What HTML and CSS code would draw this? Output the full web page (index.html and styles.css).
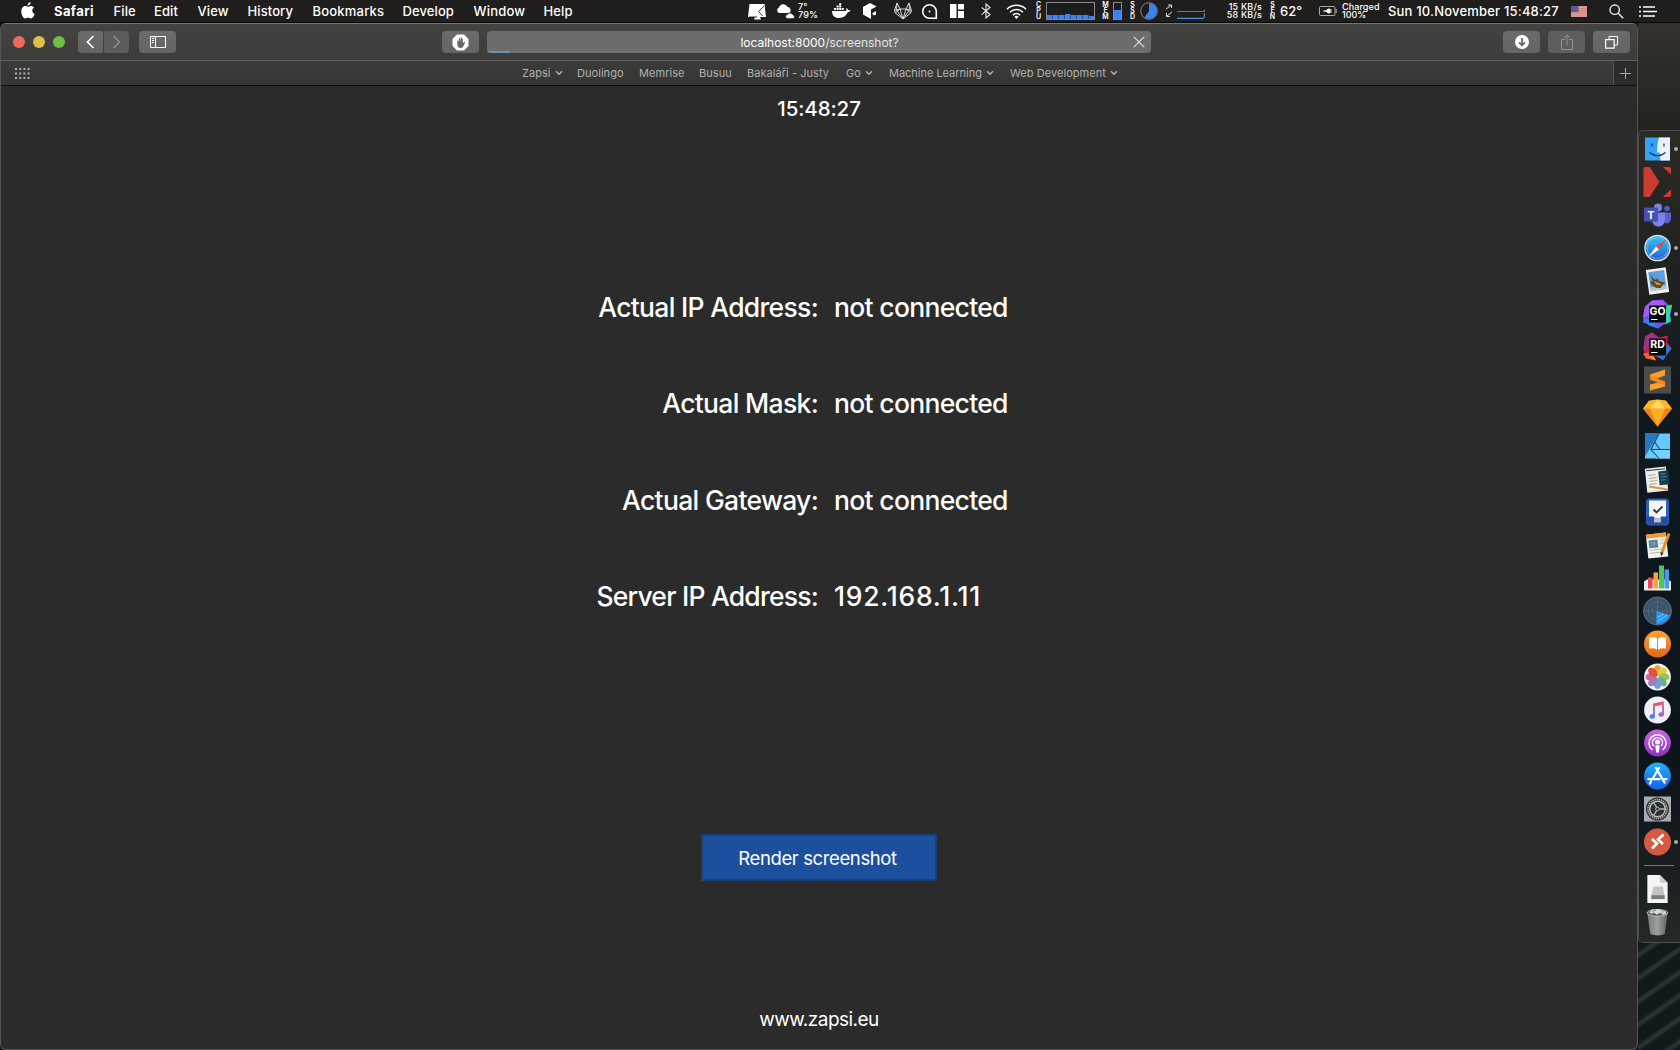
FILE: index.html
```html
<!DOCTYPE html>
<html lang="en">
<head>
<meta charset="utf-8">
<title>localhost:8000/screenshot?</title>
<link rel="stylesheet" href="styles.css">
</head>
<body>
<div class="desktop">
  <header class="menubar">
    <svg class="apple" width="14" height="17" viewBox="0 0 14 17" fill="#fff"><path d="M9.7 0c.1 1.900-1.400 3.600-3.100 3.600C6.400 1.900 8 .2 9.700 0zM7 4.700c.7 0 1.600-.8 3-.8 1.200 0 2.400.6 3.100 1.700-2.700 1.600-2.200 5.400.6 6.500-.7 2-2.200 4.400-3.700 4.400-1.100 0-1.500-.7-2.900-.7s-1.900.7-2.900.7C2.400 16.500.3 12.900.3 9.500c0-3.500 2.100-5.500 4-5.500 1.200 0 2 .7 2.700.7z"/></svg>
    <nav class="menus">
      <span class="m-safari">Safari</span><span class="m-file">File</span><span class="m-edit">Edit</span><span class="m-view">View</span><span class="m-history">History</span><span class="m-bookmarks">Bookmarks</span><span class="m-develop">Develop</span><span class="m-window">Window</span><span>Help</span>
    </nav>
    <div class="status">
      <div class="slot s-display"><svg width="18" height="17" viewBox="0 0 18 17"><path d="M1.500 1H16.500L18 14H12L13 16.500H6L7 14H0z" fill="#fff"/><path d="M10.500 8.500l5.500-5.500M1 14h8M10.500 8.500l4 4.500" stroke="#222" stroke-width=".9" fill="none"/></svg></div>
      <div class="slot s-cloud"><svg width="20" height="17" viewBox="0 0 20 17" fill="#fff"><path d="M3 10a3 3 0 0 1 0-5.500A4.500 4.500 0 0 1 11.500 4 3.200 3.200 0 0 1 13 10z"/><path d="M11 15.500a2 2 0 0 1 .5-3.900 3.200 3.200 0 0 1 5.500.4 1.800 1.800 0 0 1 0 3.500z" stroke="#222" stroke-width=".5"/></svg></div>
      <div class="slot two s-weather"><span>7°</span><span>79%</span></div>
      <div class="slot s-docker"><svg width="19" height="16" viewBox="0 0 19 16" fill="#fff"><path d="M0 8h13.500c1 0 1.200-1.800.7-3 1.200.3 1.800 1.300 1.700 2 .9-.3 2 0 2.600.5-.5 1.300-1.500 1.600-2.700 1.600C14.500 12.500 11.700 15 7 15 2.600 15 0 12.500 0 8z"/><path d="M2 5h2v2H2zM4.600 5h2v2h-2zM7.200 5h2v2h-2zM9.800 5h2v2h-2zM4.600 2.600h2v2h-2zM7.200 2.600h2v2h-2zM7.200.2h2v2h-2z"/></svg></div>
      <div class="slot s-hex"><svg width="14" height="16" viewBox="0 0 14 16"><path d="M7 0l6.500 3.500-5.500 3V16L0 11.500V4z" fill="#fff"/><path d="M9 10.500l4-2.500v3.500l-2 1z" fill="#fff"/></svg></div>
      <div class="slot s-fox"><svg width="20" height="18" viewBox="0 0 20 18" fill="none" stroke="#d8d8d8" stroke-width="1" stroke-linejoin="round"><path d="M1.500 8.500L4 1l3 6h6l3-6 2.500 7.500-.8 2.500L10 17l-7.700-6zM1.500 8.500L7 7l3 10 3-10 5.500 1.500M4 1l-.5 7L10 17l6.500-9L16 1M7 7l-4.700 4M13 7l4.700 4"/></svg></div>
      <div class="slot s-ring"><svg width="17" height="17" viewBox="0 0 17 17" fill="none" stroke="#fff"><path d="M15.300 15.300H8.500a6.800 6.800 0 1 1 6.800-6.800z" stroke-width="1.600"/><circle cx="8.500" cy="8.500" r="1" fill="#fff" stroke="none"/></svg></div>
      <div class="slot s-grid"><svg width="14" height="14" viewBox="0 0 14 14" fill="#fff"><path d="M0 0h6.500v14H0zM8 0h6v5.500H8zM8 7h6v7H8z"/></svg></div>
      <div class="slot s-bt"><svg width="10" height="16" viewBox="0 0 10 16" fill="none" stroke="#eee" stroke-width="1.100"><path d="M.7 4.300L9 11.500 5 15V1l4 3.500L.7 11.700"/></svg></div>
      <div class="slot s-wifi"><svg width="21" height="15" viewBox="0 0 21 15" fill="none" stroke="#fff" stroke-width="1.500"><path d="M1 5.200a13.400 13.400 0 0 1 19 0M4 8.300a9.200 9.200 0 0 1 13 0M6.900 11.100a5.100 5.100 0 0 1 7.200 0"/><path d="M8.400 12.700a3 3 0 0 1 4.200 0l-2.100 2.200z" fill="#fff" stroke="none"/></svg></div>
      <div class="slot stack s-cpu"><i>C</i><i>P</i><i>U</i></div>
      <div class="slot s-cpubox"><svg width="50" height="18" viewBox="0 0 50 18"><rect x=".5" y=".5" width="48" height="17" fill="#1c1c1c" stroke="#888"/><path d="M1 13h5.500v4H1zM7 13h5.500v4H7zM13 13h5.500v4H13zM19 12h5.500v5H19zM25 13h5.500v4H25zM31 13h5.500v4H31zM37 13h5.500v4H37zM43 14h5v3h-5z" fill="#3b82f6"/></svg></div>
      <div class="slot stack s-mem"><i>M</i><i>E</i><i>M</i></div>
      <div class="slot s-membox"><svg width="10" height="18" viewBox="0 0 10 18"><rect x=".5" y=".5" width="8" height="17" fill="#1c1c1c" stroke="#888"/><path d="M1 8h7v9H1z" fill="#3b82f6"/></svg></div>
      <div class="slot stack s-ssd"><i>S</i><i>S</i><i>D</i></div>
      <div class="slot s-pie"><svg width="18" height="18" viewBox="0 0 18 18"><circle cx="9" cy="9" r="8.300" fill="#1c1c1c" stroke="#888"/><path d="M9 9V1.200a7.800 7.800 0 1 1-4.500 14.200z" fill="#3b82f6"/></svg></div>
      <div class="slot s-arrows"><svg width="8" height="14" viewBox="0 0 8 14" fill="none" stroke="#ddd"><path d="M1 5l5-3.500M3 1h3.500v3M7 8l-5 4M1.500 9v3.500H5"/></svg></div>
      <div class="slot s-net"><svg width="28" height="14" viewBox="0 0 28 14" fill="none"><path d="M0 6.500h27.500V4.500" stroke="#e2443b" stroke-width="1.200"/><path d="M0 13.300h26.500q1 0 1-5" stroke="#4a90e2" stroke-width="1.200"/></svg></div>
      <div class="slot two right s-kb"><span>15 KB/s</span><span>58 KB/s</span></div>
      <div class="slot stack s-sen"><i>S</i><i>E</i><i>N</i></div>
      <div class="slot s-temp">62°</div>
      <div class="slot s-batt"><svg width="18" height="10" viewBox="0 0 18 10"><rect x=".5" y=".5" width="15.500" height="9" rx="1" fill="none" stroke="#aaa"/><path d="M17.200 3v4" stroke="#aaa"/><path d="M4.500 5H7l2-2v4L7 5zM9 3h2v4H9zM11 4h2M11 6h2" fill="#fff" stroke="#fff" stroke-width=".8"/></svg></div>
      <div class="slot two s-charged"><span>Charged</span><span class="pct">100%</span></div>
      <div class="slot s-date">Sun 10.November 15:48:27</div>
      <div class="slot s-flag"><svg width="16" height="11" viewBox="0 0 16 11"><path fill="#dfb0ae" d="M0 0h16v11H0z"/><path d="M0 .8h16M0 2.600h16M0 4.400h16M0 6.200h16M0 8h16M0 10h16" stroke="#cc7778" stroke-width=".9"/><path fill="#5b5b91" d="M0 0h7.500v6H0z"/></svg></div>
      <div class="slot s-search"><svg width="15" height="15" viewBox="0 0 15 15" fill="none" stroke="#eee" stroke-width="1.400"><circle cx="5.700" cy="5.700" r="4.700"/><path d="M9.200 9.200l5 5"/></svg></div>
      <div class="slot s-list"><svg width="18" height="11" viewBox="0 0 18 11" stroke="#fff" stroke-width="1.700"><path d="M0 1h2M4 1h12M0 5.500h2M4 5.500h14M0 10h2M4 10h12"/></svg></div>
    </div>
  </header>
  <div class="workspace">
    <main class="window">
      <div class="toolbar">
        <div class="lights"><b class="red"></b><b class="yellow"></b><b class="green"></b></div>
        <div class="btn nav"><svg width="9" height="14" viewBox="0 0 9 14" fill="none" stroke="#fff" stroke-width="1.700"><path d="M7.500 1L1.500 7l6 6"/></svg></div>
        <div class="btn nav fwd"><svg width="9" height="14" viewBox="0 0 9 14" fill="none" stroke="#929292" stroke-width="1.400"><path d="M1.500 1l6 6-6 6"/></svg></div>
        <div class="btn side"><svg width="16" height="12" viewBox="0 0 16 12" fill="none" stroke="#fff"><path d="M.5.5h15v11H.500zM5.500.5v11M2 2.500h2M2 4.500h2M2 6.500h2"/></svg></div>
        <div class="btn hand"><svg width="17" height="17" viewBox="0 0 17 17"><path d="M5 .5h7L16.500 5v7L12 16.500H5L.5 12V5z" fill="#fff"/><path d="M5.300 7v3.500q.2 3.500 3.500 3.500 2 0 2.700-2l1.700-4q-.8-.8-1.500.3l-.8 1.300V5q-.9-.7-1 0V8l-.1-4.500q-.8-.7-1.100 0V8L8 4.200q-.8-.6-1 0V8.500L6.500 6.500q-.9-.5-1.200.5z" fill="#686868"/></svg></div>
        <div class="url"><span class="address">localhost:8000<em>/screenshot?</em></span><svg class="stop" width="12" height="12" viewBox="0 0 12 12" stroke="#ddd" stroke-width="1.200"><path d="M.8.8l10.400 10.400M11.200.8L.8 11.200"/></svg></div>
        <div class="btn side dl"><svg width="14" height="14" viewBox="0 0 14 14"><circle cx="7" cy="7" r="7" fill="#fff"/><path d="M7 3v7M4 7.300l3 3 3-3" fill="none" stroke="#666" stroke-width="1.700"/></svg></div>
        <div class="btn side off"><svg width="12" height="16" viewBox="0 0 12 16" fill="none" stroke="#929292"><path d="M4 5.500H.5v10h11v-10H8M6 11V1M3 3.800l3-3 3 3"/></svg></div>
        <div class="btn side"><svg width="14" height="13" viewBox="0 0 14 13" fill="none" stroke="#fff"><path d="M.6 3.600h8.500v8.500H.600z" stroke-width="1.200"/><path d="M4 3V.5h8.500V9H9.500"/></svg></div>
      </div>
      <div class="favorites">
        <svg class="dots" width="15" height="11" viewBox="0 0 15 11" stroke="#b0b0b0" stroke-width="2" stroke-dasharray="2 2.200"><path d="M0 1h15M0 5.500h15M0 10h15"/></svg>
        <div class="links">
          <span class="f1">Zapsi<svg class="chev" viewBox="0 0 8 6"><path d="M1 1.200l3 3 3-3"/></svg></span>
          <span class="f2">Duolingo</span><span class="f3">Memrise</span><span class="f4">Busuu</span><span class="f5">Bakaláři - Justy</span>
          <span class="f6">Go<svg class="chev" viewBox="0 0 8 6"><path d="M1 1.200l3 3 3-3"/></svg></span>
          <span class="f7">Machine Learning<svg class="chev" viewBox="0 0 8 6"><path d="M1 1.200l3 3 3-3"/></svg></span>
          <span class="f8">Web Development<svg class="chev" viewBox="0 0 8 6"><path d="M1 1.200l3 3 3-3"/></svg></span>
        </div>
        <div class="plus"><svg width="11" height="11" viewBox="0 0 11 11" stroke="#aaa"><path d="M5.500 0v11M0 5.500h11"/></svg></div>
      </div>
      <section class="page">
        <div class="clock">15:48:27</div>
        <dl class="info">
          <dt>Actual IP Address:</dt><dd>not connected</dd>
          <dt>Actual Mask:</dt><dd>not connected</dd>
          <dt>Actual Gateway:</dt><dd>not connected</dd>
          <dt class="t-server">Server IP Address:</dt><dd class="t-num">192.168.1.11</dd>
        </dl>
        <div class="render">Render screenshot</div>
        <footer class="site">www.zapsi.eu</footer>
      </section>
    </main>
    <aside class="dockside">
      <ul class="dock">
        <li class="run"><svg viewBox="0 0 27 27"><path fill="#36a1f5" d="M1 2h25v23H1z"/><path fill="#e9f1fa" d="M15 2h11v23H16.500l-.8-8H13q0-9 2-15z"/><path d="M8 8v3M20 8v3M5.500 17q8 6.500 16 0" fill="none" stroke="#173255" stroke-width="1.200"/></svg></li>
        <li><svg class="wide" viewBox="0 0 29 31"><path fill="#cc3a32" d="M0 2q0-2 2-2h4.500l10 15.500L6.500 31H2q-2 0-2-2zM20 0h6.500q2 0 2 2v6zM26.500 31H20l8.500-8v6q0 2-2 2z"/></svg></li>
        <li><svg viewBox="0 0 27 27"><circle cx="14" cy="6" r="4" fill="#7b83eb"/><circle cx="23" cy="7" r="2.700" fill="#5059c9"/><path fill="#5960c8" d="M19 11h8v7q-1 4-6 4z"/><path fill="#7b83eb" d="M8 11h13v8q-1 6-7 6-5-.5-6-6z"/><rect y="6" width="14" height="14" rx="1.200" fill="#4650b5"/><text x="7" y="17" text-anchor="middle" font-size="11" font-weight="700" fill="#fff">T</text></svg></li>
        <li class="run"><svg viewBox="0 0 27 27"><circle cx="13.500" cy="13.500" r="13.300" fill="#dfe4e9"/><circle cx="13.500" cy="13.500" r="12" fill="url(#saf)"/><circle cx="13.500" cy="13.500" r="10.500" fill="none" stroke="#b8def8" stroke-dasharray=".6 1.500" stroke-width="1.500"/><path fill="#f04a3e" d="M22.500 4.500L15 15l-3-3z"/><path fill="#fff" d="M4.500 22.500L15 15l-3-3z"/></svg></li>
        <li><svg viewBox="0 0 27 27"><g transform="rotate(-8 13.500 13.500)"><path fill="#f1f0eb" d="M3.500 1h20v25h-20z"/><path fill="#5d9fdf" d="M5.500 3.500h16v19h-16z"/><path fill="#b4c6ce" d="M5.500 19h16v3.500h-16z"/><path fill="#65471f" d="M7 6l4 6 3-1 1 3 6 2-4 3-1 2-5-1-4-4-1-3 3 0z"/><path fill="#d2a454" d="M10 13l5 3 2 2-5-1z"/></g></svg></li>
        <li class="run"><svg class="wide" viewBox="0 0 29 29"><path fill="#7151f3" d="M9 1l11-1 5 5 4 1-2 10-3 7-9 6-9-4-6-2 1-13z"/><path fill="#35d0b8" d="M19 10l10-4-2 9 1 7-6 3z"/><path fill="#4bd76d" d="M22 7l7-2-2 6z"/><path fill="#aa59f5" d="M2 7l7-6 11 0 2 7-10 5L0 18z"/><path fill="#268bea" d="M0 19l8 2 8 8-10-3z"/><path fill="#090909" d="M6 6h17v17H6z"/><text x="14.500" y="15" text-anchor="middle" font-size="10.500" font-weight="700" fill="#fff">GO</text><path stroke="#fff" d="M8 20h6.500"/></svg></li>
        <li><svg class="wide" viewBox="0 0 29 29"><path fill="#c71e59" d="M2 4l7-4 7 5 9-2-1 7 5 6-9 11-11-4-8-1z"/><path fill="#e9652f" d="M0 21l8-1 5 8-10-2z"/><path fill="#a03283" d="M9 0l7 5-8 7L0 18l2-14z"/><path fill="#2677ce" d="M22 11l6 5-8 12-6-5z"/><path fill="#f49a2e" d="M5 24h6l2 4z"/><path fill="#090909" d="M6 6h17v17H6z"/><text x="14.500" y="15" text-anchor="middle" font-size="10.500" font-weight="700" fill="#fff">RD</text><path stroke="#fff" d="M8 20h6.500"/></svg></li>
        <li><svg viewBox="0 0 27 27"><path fill="#4c4c4c" d="M0 0h27v27H0z"/><path fill="#ff9d2e" d="M6 8l15-5v6l-8 3 8 3v5L6 24v-6l8-2-8-3z"/><path fill="#d87915" d="M6 9v4l15 6v-4z" opacity=".5"/></svg></li>
        <li><svg class="wide" viewBox="0 0 29 27"><path fill="#fdb52b" d="M6 1l8.500-1L23 1l6 8-14.500 18L0 9z"/><path fill="#ed8418" d="M0 9h29L14.500 27z"/><path fill="#fcad26" d="M7 9h15l-7.500 18z"/><path fill="#ffd86a" d="M14.500 0L22 9H7z"/></svg></li>
        <li><svg viewBox="0 0 27 27"><path fill="#65c9fa" d="M1 1h25v25H1z"/><path fill="#2878bf" d="M1 1h14L1 24z"/><path fill="#79d2fc" d="M12 26h14V17H7z"/><path d="M15 1L7 17l8 9M7 17h19M11 10l5 7" fill="none" stroke="#1b4568" stroke-width="1.100"/></svg></li>
        <li><svg viewBox="0 0 27 27"><g transform="rotate(-6 13.500 13.500)"><path fill="#eeeeea" d="M2 2h21v24H2z"/><path stroke="#999" d="M5 9h7M5 12h8M5 15h8M5 18h7" stroke-width=".8"/><path stroke="#333" d="M3 4h19"/><path fill="#173b4f" d="M15 6h10v14H15z"/><path stroke="#4aa5ae" d="M17 9h5M17 12h6M17 15h4" stroke-width=".8"/></g><path stroke="#db963f" stroke-width="1.800" d="M5 21l19 3"/></svg></li>
        <li><svg viewBox="0 0 27 27"><rect x="2" width="23" height="27" rx="4" fill="#2d62bb"/><path fill="#f5f5f5" d="M5 2h17v18H5z"/><path fill="#244f9f" d="M3 18h7l1 3h5l1-3h7v5q0 3-4 3H7q-4 0-4-3z"/><path fill="#b8bdc5" d="M10 20h7v4h-7z"/><path d="M9.500 11l3 3 6-6" fill="none" stroke="#333" stroke-width="1.800"/></svg></li>
        <li><svg viewBox="0 0 27 27"><g transform="rotate(-6 13.500 13.500)"><path fill="#f7f4ec" d="M3 2h20v24H3z"/><path fill="#f49737" d="M3 2h20v4H3z"/><path fill="#3391cf" d="M5 8h9v8H5z"/><path fill="#ee793d" d="M7 10h5l-2 5z"/><path stroke="#aaa" d="M16 9h5M16 12h5M5 18h14M5 21h13" stroke-width=".8"/></g><path stroke="#e98d24" stroke-width="3" d="M25 2l-7 19"/><path fill="#222" d="M16.500 20.500l3 1L17 25z"/></svg></li>
        <li><svg viewBox="0 0 27 27"><path fill="#eee" d="M0 17l3-2h21l3 2v9H0z"/><path fill="#e94757" d="M4 13h4.500v11H4z"/><path fill="#f8a43a" d="M9.500 8H14v16H9.500z"/><path fill="#54c552" d="M15 1h5v23h-5z"/><path fill="#459aef" d="M20.500 5H25v19h-4.500z"/></svg></li>
        <li><svg class="wide" viewBox="0 0 28 28"><circle cx="14" cy="14" r="13.500" fill="#3d5367" stroke="#66798a" stroke-width=".8"/><g fill="none" stroke="#768c9d" stroke-width=".3"><circle cx="14" cy="14" r="9"/><circle cx="14" cy="14" r="5"/><path d="M14 1v26M1 14h26"/></g><path fill="#269cf7" d="M13 14l13 4q-3 8-13 9z"/><path d="M14 20l6-3M14 24l9-6" stroke="#7bcaff" fill="none" stroke-width=".8"/></svg></li>
        <li><svg viewBox="0 0 27 27"><circle cx="13.500" cy="13.500" r="13.500" fill="url(#book)"/><path fill="#fff" d="M5 7q5-1 8 1v11q-3-2-8-1zM14 8q3-2 8-1v11q-5-1-8 1z"/></svg></li>
        <li><svg viewBox="0 0 27 27"><circle cx="13.500" cy="13.500" r="13.400" fill="#f5f5f3"/><g transform="translate(13.500 13.500)" opacity=".9"><ellipse cy="-6.500" rx="3.800" ry="5.500" fill="#f39a27"/><ellipse cy="-6.500" rx="3.800" ry="5.500" fill="#d9cf30" transform="rotate(45)"/><ellipse cy="-6.500" rx="3.800" ry="5.500" fill="#93bf45" transform="rotate(90)"/><ellipse cy="-6.500" rx="3.800" ry="5.500" fill="#57ae88" transform="rotate(135)"/><ellipse cy="-6.500" rx="3.800" ry="5.500" fill="#659cce" transform="rotate(180)"/><ellipse cy="-6.500" rx="3.800" ry="5.500" fill="#8a78b8" transform="rotate(225)"/><ellipse cy="-6.500" rx="3.800" ry="5.500" fill="#c45b9a" transform="rotate(270)"/><ellipse cy="-6.500" rx="3.800" ry="5.500" fill="#e2402f" transform="rotate(315)"/></g></svg></li>
        <li><svg viewBox="0 0 27 27"><circle cx="13.500" cy="13.500" r="13.400" fill="#f0f0f4"/><path d="M10 20V8l9-2v12" fill="none" stroke="url(#note)" stroke-width="1.800"/><path d="M10 8.500l9-2" stroke="#eb5674" stroke-width="3"/><ellipse cx="8.200" cy="20" rx="2.700" ry="2.200" fill="#4b7bf1"/><ellipse cx="17.200" cy="18" rx="2.700" ry="2.200" fill="#a064dc"/></svg></li>
        <li><svg viewBox="0 0 27 27"><circle cx="13.500" cy="13.500" r="13.400" fill="url(#pod)"/><g fill="none" stroke="#fff" stroke-width="1.500"><path d="M8.500 20.500a8.500 8.500 0 1 1 10 0M9.800 16.500a5 5 0 1 1 7.400 0"/></g><circle cx="13.500" cy="12.500" r="2.500" fill="#fff"/><path fill="#fff" d="M11.300 16q2.200-1.200 4.400 0l-.8 7h-2.800z"/></svg></li>
        <li><svg viewBox="0 0 27 27"><circle cx="13.500" cy="13.500" r="13.400" fill="url(#store)"/><path d="M12 5.500l8.500 14.500M15 5.500L8.500 16.500M7 19l-1 2M4.500 16.700h11M19 16.700h3.500" stroke="#fff" stroke-width="2.300" stroke-linecap="round"/></svg></li>
        <li><svg viewBox="0 0 27 27"><path fill="#a6abad" d="M0 1h27v25H0z"/><circle cx="13.500" cy="13.500" r="11.500" fill="#2d2f31"/><circle cx="13.500" cy="13.500" r="9.600" fill="none" stroke="#aeb1b2" stroke-width="1.500" stroke-dasharray="1.400 .8"/><circle cx="13.500" cy="13.500" r="7.800" fill="none" stroke="#bbb" stroke-width="1.500"/><circle cx="13.500" cy="13.500" r="1.800" fill="#2d2f31" stroke="#bbb"/><path d="M15.500 13.500H21M12.500 11.700L9.600 7M12.500 15.300l-2.900 4.700" stroke="#bbb" stroke-width="1.300"/></svg></li>
        <li class="run"><svg viewBox="0 0 27 27"><circle cx="13.500" cy="13.500" r="13.500" fill="#d45b3f"/><path d="M8 10.500l5 4.500-5 5M19.500 6L14 11l5 4.500" fill="none" stroke="#fff" stroke-width="2.600"/></svg></li>
        <li class="separator"></li>
        <li><svg viewBox="0 0 27 29"><path fill="#f6f6f6" d="M3 0h13l8 8v21H3z"/><path fill="#ccc" d="M16 0v8h8z"/><path fill="#c0c5c4" d="M9 12h10l2 11H7z"/><path fill="#777c7c" d="M7 21h14v4H7z"/></svg></li>
        <li><svg viewBox="0 0 27 29"><path fill="url(#bin)" d="M3 5h21l-3 22q-7 3-15 0z"/><path stroke="#b1b1b1" stroke-width=".4" d="M7 8l2 19M11 8l1 20M15 8v20M20 8l-2 19" opacity=".4"/><ellipse cx="13.500" cy="5" rx="10.700" ry="3.500" fill="#565959" stroke="#bbb"/><path fill="#d9dcda" d="M5 5l3-4 3 2 2-2 4 1 4 1 2 3-4 1-3-2-3 2-3-2-3 1z"/><path fill="#6ca481" d="M8 2l2 2-2 1zM18 3l2 1-2 2z"/></svg></li>
      </ul>
    </aside>
  </div>
</div>
<svg width="0" height="0" class="defs"><defs>
<linearGradient id="saf" x2="0" y2="1"><stop stop-color="#32c5f4"/><stop offset="1" stop-color="#2462cc"/></linearGradient>
<linearGradient id="book" x2="0" y2="1"><stop stop-color="#fba331"/><stop offset="1" stop-color="#e6641c"/></linearGradient>
<linearGradient id="note" x2="0" y2="1"><stop stop-color="#f5576c"/><stop offset="1" stop-color="#4b7bf1"/></linearGradient>
<linearGradient id="pod" x2="0" y2="1"><stop stop-color="#cb67e6"/><stop offset="1" stop-color="#8b32bb"/></linearGradient>
<linearGradient id="store" x2="0" y2="1"><stop stop-color="#20aef8"/><stop offset="1" stop-color="#1765ea"/></linearGradient>
<linearGradient id="bin"><stop stop-color="#777a7b"/><stop offset=".5" stop-color="#9b9fa0"/><stop offset="1" stop-color="#5b5e60"/></linearGradient>
</defs></svg>
</body>
</html>
```
FILE: styles.css
```css
* { box-sizing: border-box; }
body { margin: 0; overflow: hidden; font-family: Inter, "Liberation Sans", sans-serif; color: #fff; background: #111; }
svg { display: block; flex: none; }
.defs { position: absolute; }
.desktop { width: 1680px; height: 1050px; display: flex; flex-direction: column; }

.menubar { height: 23px; flex: none; background: #1f1e1c; border-bottom: 1px solid #080808; display: flex; align-items: center; font-size: 13px; font-weight: 500; white-space: nowrap; }
.apple { margin: -2px 0 0 21px; }
.menus { display: flex; margin-left: 19px; width: 694px; gap: 19px; letter-spacing: .1px; }
.menus span { flex: none; }
.menus .m-safari { font-weight: 700; width: 40.500px; letter-spacing: .4px; }
.menus .m-file { width: 21.500px; }
.menus .m-edit { width: 24.500px; }
.menus .m-view { width: 31px; }
.menus .m-history { width: 46px; }
.menus .m-bookmarks { width: 71px; letter-spacing: .2px; }
.menus .m-develop { width: 52px; }
.menus .m-window { width: 51px; letter-spacing: .2px; }
.status { display: flex; align-items: center; height: 22px; }
.slot { flex: none; display: flex; align-items: center; height: 22px; }
.s-display { width: 28px; }
.s-cloud { width: 22px; }
.two { flex-direction: column; align-items: flex-start; justify-content: center; font-size: 9px; line-height: 8.500px; letter-spacing: .1px; }
.right { align-items: flex-end; }
.s-weather { width: 34px; }
.s-docker { width: 31px; }
.s-hex { width: 30px; }
.s-fox { width: 28px; }
.s-ring { width: 29px; }
.s-grid { width: 31px; }
.s-bt { width: 25px; }
.s-wifi { width: 29px; }
.stack { flex-direction: column; justify-content: center; align-items: center; font-size: 7px; line-height: 6px; font-weight: 600; width: 7px; }
.stack i { font-style: normal; height: 6px; }
.s-cpu { margin-right: 4px; }
.s-cpubox { width: 56px; }
.s-mem { margin-right: 4px; }
.s-membox { width: 16px; }
.s-ssd { margin-right: 4px; }
.s-pie { width: 25px; }
.s-arrows { width: 12px; }
.s-net { width: 36px; padding-top: 2px; }
.s-kb { width: 49px; letter-spacing: .2px; }
.s-sen { margin: 0 4px 0 7px; }
.s-temp { width: 39px; }
.s-batt { width: 23px; }
.s-charged { width: 46px; }
.pct { letter-spacing: 0; }
.s-date { width: 183px; letter-spacing: .19px; }
.s-flag { width: 38px; }
.s-search { width: 30px; }

.workspace { flex: 1; display: flex; min-height: 0; background: #101718; }
.window { width: 1638px; flex: none; border: 1px solid #555; border-top-color: #777; border-radius: 6px; overflow: hidden; background: #2b2b2b; display: flex; flex-direction: column; }
.toolbar { height: 37px; flex: none; display: flex; align-items: center; background: linear-gradient(#434342, #3c3c3b); border-bottom: 1px solid #5c5c5c; padding: 0 7px 0 12px; }
.lights { display: flex; gap: 8px; width: 65px; }
.lights b { width: 12px; height: 12px; border-radius: 50%; }
.red { background: #ee695e; }
.yellow { background: #e0bf4d; }
.green { background: #6ebd45; }
.btn { height: 22px; border-radius: 4px; background: linear-gradient(#6c6c6c, #646464); display: flex; align-items: center; justify-content: center; flex: none; }
.nav { width: 25px; border-radius: 4px 2px 2px 4px; }
.fwd { margin-left: 1px; border-radius: 2px 4px 4px 2px; background: #5c5c5c; }
.side { width: 37px; margin-left: 8px; }
.off { background: #5e5e5e; }
.fwd + .side { margin-left: 10px; }
.hand { width: 37px; margin-left: 266px; }
.url { width: 664px; height: 22px; margin-left: 8px; border-radius: 4px; background: linear-gradient(90deg, #6297b7 23px, transparent 23px) 0 100% / 100% 2px no-repeat, #6d6d6d; display: flex; align-items: center; font-size: 12px; }
.address { flex: 1; text-align: center; padding-left: 19px; letter-spacing: -.01px; }
.address em { font-style: normal; color: #e4e4e4; }
.stop { margin-right: 6px; }
.side.dl { margin-left: auto; }

.favorites { height: 25px; flex: none; display: flex; align-items: center; background: linear-gradient(#3b3b3a, #353534); border-bottom: 1px solid #111; color: #b0b0b0; }
.dots { margin-left: 14px; }
.links { display: flex; margin-left: 492px; width: 1091px; font-size: 11px; white-space: nowrap; letter-spacing: .05px; }
.links span { display: flex; align-items: center; justify-content: space-between; flex: none; }
.chev { width: 8px; height: 6px; fill: none; stroke: #b0b0b0; stroke-width: 1.500; }
.f1 { width: 40.500px; margin-right: 14.500px; }
.f2 { width: 46px; margin-right: 16px; }
.f3 { width: 45px; margin-right: 15px; }
.f4 { width: 33px; margin-right: 15px; }
.f5 { width: 81px; margin-right: 18px; }
.f6 { width: 26.500px; margin-right: 16.500px; }
.f7 { width: 104.500px; margin-right: 16.500px; letter-spacing: -.02px; }
.f8 { width: 107.500px; }
.plus { width: 24px; height: 24px; background: #2b2b2b; border-left: 1px solid #555; display: flex; align-items: center; justify-content: center; margin-left: auto; }

.page { flex: 1; display: flex; flex-direction: column; align-items: center; }
.clock { font-size: 20.500px; font-weight: 500; line-height: 24px; margin-top: 11px; letter-spacing: -.1px; }
.info { margin: 138px 0 0; display: grid; grid-template-columns: 817px 803px; grid-auto-rows: 96.300px; column-gap: 16px; width: 1636px; font-size: 26.500px; font-weight: 500; line-height: 96px; white-space: nowrap; letter-spacing: -.69px; }
.info dt { text-align: right; }
.info dd { margin: 0; }
.info .t-server { letter-spacing: -.77px; }
.info .t-num { letter-spacing: .75px; }
.render { width: 236px; height: 47px; margin-top: 190px; background: #1d4f9f; border: 2px solid #1b4077; font-size: 18.500px; line-height: 45px; text-align: center; letter-spacing: -.38px; padding-right: 3px; }
.site { font-size: 19px; line-height: 24px; margin-top: 127px; letter-spacing: -.53px; }

.dockside { width: 42px; padding-top: 107px; background: repeating-linear-gradient(145deg, transparent 0 6px, rgba(88, 100, 100, .4) 10px, transparent 14px 19px) 0 100% / 100% 107px no-repeat, linear-gradient(#35322d, #24231f 100px, #11191b 400px, #11191b); }
.dock { list-style: none; margin: 0; height: 813px; border: 1px solid #4b4b4a; border-right: 0; border-radius: 5px 0 0 5px; background: linear-gradient(#2c2a27, #20221f 140px, #101820 280px, #0d151b 650px, #242827); padding: 1px 0 0; }
.dock li { height: 33px; display: flex; align-items: center; padding-left: 5px; }
.dock li svg { width: 27px; height: 28px; }
.dock li svg.wide { width: 29px; height: 30px; margin-left: -1px; }
.run::after { content: ""; width: 4px; height: 4px; border-radius: 50%; background: #aaa; margin-left: auto; margin-right: 2px; }
.dock .separator { height: 14px; }
.separator::before { content: ""; width: 30px; height: 1px; background: #777; }
```
